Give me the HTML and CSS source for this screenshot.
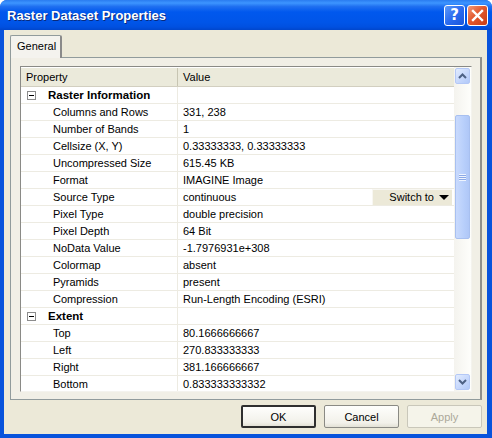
FILE: index.html
```html
<!DOCTYPE html>
<html lang="en">
<head>
    <meta charset="UTF-8">
    <title>Raster Dataset Properties</title>
    <link rel="stylesheet" href="styles.css">
</head>
<body>
    <div class="window">
        <div class="titlebar">
            <div class="title">Raster Dataset Properties</div>
            <div class="caption-btn help">?</div>
            <div class="caption-btn close">
                <svg width="13" height="13" viewBox="0 0 13 13"><path d="M2 2 L11 11 M11 2 L2 11" stroke="#fff" stroke-width="2.4" stroke-linecap="square"/></svg>
            </div>
        </div>

        <div class="client">
            <div class="tabs">
                <div class="tab">General</div>
            </div>

            <div class="panel">
                <div class="grid">
                    <div class="grid-body">
                        <div class="grid-head">
                            <div class="c-prop">Property</div>
                            <div class="c-val">Value</div>
                        </div>

                        <div class="row cat"><div class="c-prop"><span class="exp"></span>Raster Information</div><div class="c-val"></div></div>
                        <div class="row"><div class="c-prop">Columns and Rows</div><div class="c-val">331, 238</div></div>
                        <div class="row"><div class="c-prop">Number of Bands</div><div class="c-val">1</div></div>
                        <div class="row"><div class="c-prop">Cellsize (X, Y)</div><div class="c-val">0.33333333, 0.33333333</div></div>
                        <div class="row"><div class="c-prop">Uncompressed Size</div><div class="c-val">615.45 KB</div></div>
                        <div class="row"><div class="c-prop">Format</div><div class="c-val">IMAGINE Image</div></div>
                        <div class="row"><div class="c-prop">Source Type</div><div class="c-val">continuous<span class="switch">Switch to <span class="tri"></span></span></div></div>
                        <div class="row"><div class="c-prop">Pixel Type</div><div class="c-val">double precision</div></div>
                        <div class="row"><div class="c-prop">Pixel Depth</div><div class="c-val">64 Bit</div></div>
                        <div class="row"><div class="c-prop">NoData Value</div><div class="c-val">-1.7976931e+308</div></div>
                        <div class="row"><div class="c-prop">Colormap</div><div class="c-val">absent</div></div>
                        <div class="row"><div class="c-prop">Pyramids</div><div class="c-val">present</div></div>
                        <div class="row"><div class="c-prop">Compression</div><div class="c-val">Run-Length Encoding (ESRI)</div></div>
                        <div class="row cat"><div class="c-prop"><span class="exp"></span>Extent</div><div class="c-val"></div></div>
                        <div class="row"><div class="c-prop">Top</div><div class="c-val">80.1666666667</div></div>
                        <div class="row"><div class="c-prop">Left</div><div class="c-val">270.833333333</div></div>
                        <div class="row"><div class="c-prop">Right</div><div class="c-val">381.166666667</div></div>
                        <div class="row"><div class="c-prop">Bottom</div><div class="c-val">0.833333333332</div></div>
                    </div>

                    <div class="scrollbar">
                        <div class="sb-btn">
                            <svg width="9" height="6" viewBox="0 0 9 6"><path d="M1 5 L4.5 1.5 L8 5" fill="none" stroke="#4D6185" stroke-width="2"/></svg>
                        </div>
                        <div class="sb-track">
                            <div class="sb-thumb"><span class="grip"></span></div>
                        </div>
                        <div class="sb-btn">
                            <svg width="9" height="6" viewBox="0 0 9 6"><path d="M1 1 L4.5 4.5 L8 1" fill="none" stroke="#4D6185" stroke-width="2"/></svg>
                        </div>
                    </div>
                </div>
            </div>

            <div class="buttons">
                <button class="btn default">OK</button>
                <button class="btn">Cancel</button>
                <button class="btn" disabled>Apply</button>
            </div>
        </div>
    </div>
</body>
</html>
```

FILE: styles.css
```css
body {
    margin: 0;
    font-family: "Liberation Sans", Arial, sans-serif;
    font-size: 11px;
    color: #000;
    background: #fff;
}

.window {
    width: 492px;
    height: 438px;
    box-sizing: border-box;
    display: flex;
    flex-direction: column;
    background: #0853DC;
    border-radius: 7px 7px 0 0;
    overflow: hidden;
}

.titlebar {
    height: 30px;
    flex: none;
    display: flex;
    align-items: center;
    padding: 0 4px 0 7px;
    background: linear-gradient(to bottom, #2A7CF0 0%, #3D95FF 10%, #1F6FF0 22%, #0058EE 40%, #0055E8 75%, #0050E0 90%, #0046CC 100%);
}

.title {
    flex: 1;
    color: #fff;
    font-size: 13px;
    font-weight: bold;
    text-shadow: 1px 1px 0 #0A2A7A;
    margin-top: 1px;
}

.caption-btn {
    width: 21px;
    height: 21px;
    box-sizing: border-box;
    border: 1px solid #fff;
    border-radius: 3px;
    margin-left: 2px;
    display: flex;
    align-items: center;
    justify-content: center;
    color: #fff;
}

.help {
    background: linear-gradient(135deg, #5E9AF8 0%, #2A6BF0 50%, #1A55DA 100%);
    font-family: "DejaVu Sans", sans-serif;
    font-size: 15px;
    font-weight: bold;
}

.close {
    background: linear-gradient(135deg, #F29A78 0%, #E2582E 45%, #C83C14 100%);
}

.client {
    flex: 1;
    display: flex;
    flex-direction: column;
    background: #ECE9D8;
    margin: 0 5px 4px 4px;
}

.tabs {
    display: flex;
    padding: 5px 0 0 6px;
    height: 22px;
}

.tab {
    width: 52px;
    height: 23px;
    box-sizing: border-box;
    border: 1px solid #919B9C;
    border-bottom: none;
    border-right: 2px solid #8A8A8A;
    border-radius: 2px 2px 0 0;
    background: #F4F3EE;
    padding: 4px 0 0 6px;
    position: relative;
    z-index: 1;
}

.panel {
    margin: 0 5px 0 6px;
    height: 343px;
    box-sizing: border-box;
    border: 1px solid #919B9C;
    border-right: 2px solid #8F8F8A;
    background: #F1EFE6;
    padding: 8px 8px 6px 9px;
}

.grid {
    height: 326px;
    box-sizing: border-box;
    border: 1px solid;
    border-color: #8A8A86 #F4F3EE #F4F3EE #8A8A86;
    background: #fff;
    display: flex;
    overflow: hidden;
}

.grid-body {
    flex: 1;
    overflow: hidden;
    padding-top: 1px;
}

.grid-head {
    display: flex;
    height: 19px;
    box-sizing: border-box;
    background: #EBEADB;
    border-bottom: 1px solid #D2CFC0;
    line-height: 18px;
}

.grid-head .c-prop {
    border-right: 1px solid #C7C5B2;
    padding-left: 5px;
}

.row {
    display: flex;
    height: 17px;
    box-sizing: border-box;
    border-bottom: 1px solid #EDEBE2;
    line-height: 17px;
}

.c-prop {
    width: 157px;
    flex: none;
    box-sizing: border-box;
    padding-left: 32px;
    border-right: 1px solid #EDEBE2;
    white-space: nowrap;
}

.c-val {
    flex: 1;
    padding-left: 5px;
    white-space: nowrap;
    display: flex;
}

.cat .c-prop {
    padding-left: 6px;
    font-weight: bold;
    font-size: 11.5px;
    display: flex;
    align-items: center;
}

.exp {
    width: 9px;
    height: 9px;
    box-sizing: border-box;
    border: 1px solid #8C8C8C;
    margin-right: 12px;
    position: relative;
}

.exp::after {
    content: "";
    position: absolute;
    left: 1px;
    top: 3px;
    width: 5px;
    height: 1px;
    background: #000;
}

.switch {
    margin-left: auto;
    margin-right: 2px;
    width: 80px;
    height: 16px;
    box-sizing: border-box;
    background: #ECE9D8;
    border-top: 1px solid #F8F7F2;
    border-left: 1px solid #F8F7F2;
    line-height: 15px;
    display: flex;
    align-items: center;
    justify-content: flex-end;
    padding-right: 3px;
    gap: 5px;
}

.tri {
    width: 0;
    height: 0;
    border-left: 5px solid transparent;
    border-right: 5px solid transparent;
    border-top: 5px solid #000;
}

.scrollbar {
    width: 17px;
    flex: none;
    display: flex;
    flex-direction: column;
    background: linear-gradient(to right, #F4F3EE, #FEFEFB);
}

.sb-btn {
    height: 16px;
    box-sizing: border-box;
    margin: 1px;
    border: 1px solid #B4C8F6;
    border-radius: 2px;
    background: linear-gradient(135deg, #E2ECFE 0%, #C4D6FC 60%, #B2C9F8 100%);
    display: flex;
    align-items: center;
    justify-content: center;
}

.sb-track {
    flex: 1;
    padding-top: 30px;
}

.sb-thumb {
    height: 124px;
    margin: 0 1px;
    box-sizing: border-box;
    border: 1px solid #A8C0F0;
    border-radius: 2px;
    background: linear-gradient(to right, #C9DAFD, #B8CFFB 60%, #AFC7F7);
    display: flex;
    align-items: center;
    justify-content: center;
}

.grip {
    width: 7px;
    height: 7px;
    background: repeating-linear-gradient(to bottom, #EEF4FE 0 1px, #8CA9E6 1px 2px);
}

.buttons {
    display: flex;
    justify-content: flex-end;
    gap: 8px;
    padding: 5px 0 0;
    margin-right: 5px;
}

.btn {
    width: 75px;
    height: 23px;
    font-family: "Liberation Sans", Arial, sans-serif;
    font-size: 11px;
    background: linear-gradient(to bottom, #FEFEFC, #F2F1EA 80%, #E3E1D6);
    border: 1px solid #8A8A84;
    border-radius: 2px;
    color: #000;
    padding: 0;
}

.btn.default {
    border: 2px solid #2F2F2F;
}

.btn:disabled {
    color: #ACA899;
    border-color: #C9C7BA;
    background: #F5F4EA;
}
```
